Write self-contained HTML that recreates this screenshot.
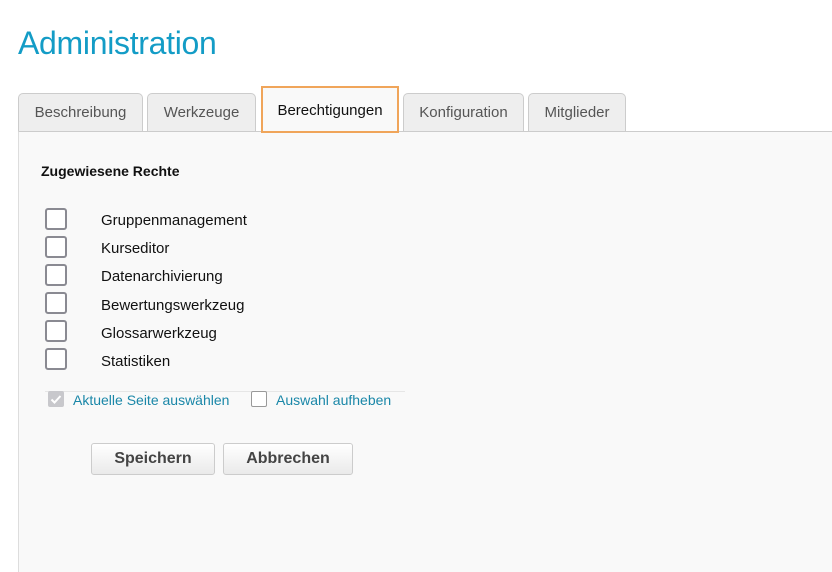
<!DOCTYPE html>
<html><head><meta charset="utf-8"><style>
body{margin:0;width:832px;height:561px;background:#fff;font-family:"Liberation Sans",Arial,sans-serif;position:relative;overflow:hidden}
.a{position:absolute}
h1{position:absolute;left:18px;top:25px;margin:0;font-weight:normal;font-size:32px;color:#139cc6;letter-spacing:-0.3px}
.tab{position:absolute;top:93px;height:38px;box-sizing:border-box;background:#eee;border:1px solid #ccc;border-bottom:none;border-radius:5px 5px 0 0;color:#555;font-size:15px;text-align:center;line-height:38px}
.panel{position:absolute;left:18px;top:131px;width:830px;height:440px;background:#f9f9f9;border-top:1px solid #ccc;border-left:1px solid #ddd}
.cb{position:absolute;left:45px;width:22px;height:22px;box-sizing:border-box;border:2px solid #8a8a92;border-radius:3px;background:#fff}
.lb{position:absolute;left:101px;font-size:15px;color:#111}
.btn{position:absolute;top:443px;height:32px;box-sizing:border-box;border:1px solid #ccc;border-radius:3px;background:linear-gradient(#fff,#eaeaea);font-weight:bold;font-size:16px;color:#444;text-align:center;line-height:30px}
</style></head><body>
<h1>Administration</h1>
<div class="panel"></div>
<div class="tab" style="left:18px;width:125px">Beschreibung</div>
<div class="tab" style="left:147px;width:109px">Werkzeuge</div>
<div class="a" style="left:261px;top:86px;width:138px;height:47px;background:#f9f9f9;border:2px solid #f0a55a;box-sizing:border-box;font-size:15px;color:#111;text-align:center;line-height:46px">Berechtigungen</div>
<div class="tab" style="left:403px;width:121px">Konfiguration</div>
<div class="tab" style="left:528px;width:98px">Mitglieder</div>
<div class="a" style="left:41px;top:163px;font-weight:bold;font-size:14px;color:#111">Zugewiesene Rechte</div>
<div class="cb" style="top:208px"></div><div class="lb" style="top:212px">Gruppenmanagement</div>
<div class="cb" style="top:236px"></div><div class="lb" style="top:240px">Kurseditor</div>
<div class="cb" style="top:264px"></div><div class="lb" style="top:268px">Datenarchivierung</div>
<div class="cb" style="top:292px"></div><div class="lb" style="top:297px">Bewertungswerkzeug</div>
<div class="cb" style="top:320px"></div><div class="lb" style="top:325px">Glossarwerkzeug</div>
<div class="cb" style="top:348px"></div><div class="lb" style="top:353px">Statistiken</div>
<div class="a" style="left:45px;top:391px;width:360px;height:1px;background:#e6e6e6"></div>
<div class="a" style="left:48px;top:391px;width:16px;height:16px;background:#c8c8cc;border-radius:2px"><svg width="16" height="16"><path d="M3.5 8.5l3 3 6-6.5" stroke="#fff" stroke-width="2" fill="none"/></svg></div>
<div class="a" style="left:73px;top:392px;font-size:14px;color:#1a87a8">Aktuelle Seite auswählen</div>
<div class="a" style="left:251px;top:391px;width:16px;height:16px;box-sizing:border-box;border:1.5px solid #999;border-radius:2px;background:#fff"></div>
<div class="a" style="left:276px;top:392px;font-size:14px;color:#1a87a8">Auswahl aufheben</div>
<div class="btn" style="left:91px;width:124px">Speichern</div>
<div class="btn" style="left:223px;width:130px">Abbrechen</div>
</body></html>
